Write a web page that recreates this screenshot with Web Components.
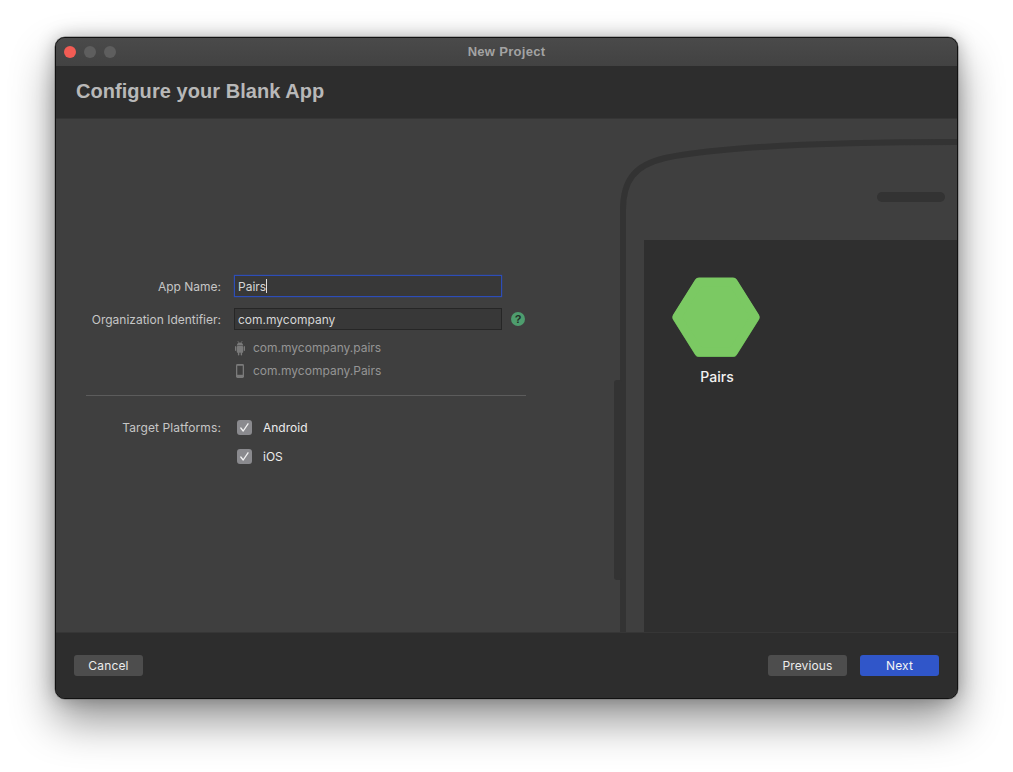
<!DOCTYPE html>
<html>
<head>
<meta charset="utf-8">
<title>New Project</title>
<style>
  html, body { margin: 0; height: 100%; background: #fff; }
  body {
    padding: 37px 0 0 55px;
    box-sizing: border-box;
    font-family: Inter, "Liberation Sans", sans-serif;
    overflow: hidden;
  }
</style>
</head>
<body>
<app-window>
  <title-bar slot="top">New Project</title-bar>
  <wizard-header slot="top">Configure your Blank App</wizard-header>
  <project-form>
    <form-row label="App Name:"><text-field value="Pairs" focused></text-field></form-row>
    <form-row label="Organization Identifier:" help><text-field value="com.mycompany"></text-field></form-row>
    <bundle-id icon="android">com.mycompany.pairs</bundle-id>
    <bundle-id icon="phone">com.mycompany.Pairs</bundle-id>
    <form-divider></form-divider>
    <form-row label="Target Platforms:" check><check-box>Android</check-box></form-row>
    <form-row check-next><check-box>iOS</check-box></form-row>
  </project-form>
  <phone-preview name="Pairs"></phone-preview>
  <wizard-footer slot="bottom">
    <mac-button>Cancel</mac-button>
    <mac-button slot="right">Previous</mac-button>
    <mac-button slot="right" primary>Next</mac-button>
  </wizard-footer>
</app-window>

<script>
function shadow(el, html) {
  el.attachShadow({ mode: "open" });
  const t = document.createElement("template");
  t.innerHTML = html;
  el.shadowRoot.appendChild(t.content.cloneNode(true));
}

class AppWindow extends HTMLElement {
  constructor() {
    super();
    shadow(this, `
      <style>
        :host {
          display: flex;
          flex-direction: column;
          width: 903px;
          height: 662px;
          box-sizing: border-box;
          background: #3f3f3f;
          border: 1px solid #111;
          border-radius: 10px;
          overflow: hidden;
          box-shadow: 0 0 0 .5px #777, 0 22px 44px rgba(0,0,0,.42), 0 0 18px rgba(0,0,0,.26);
        }
        .body { flex: 1; display: flex; min-height: 0; }
      </style>
      <slot name="top"></slot>
      <div class="body"><slot></slot></div>
      <slot name="bottom"></slot>
    `);
  }
}

class TitleBar extends HTMLElement {
  constructor() {
    super();
    shadow(this, `
      <style>
        :host {
          display: flex;
          align-items: center;
          justify-content: center;
          position: relative;
          height: 28px;
          box-sizing: border-box;
          padding-bottom: 2px;
          background: linear-gradient(#4a4a4a, #424242);
          color: #a3a3a3;
          font: 700 13px "Liberation Sans", sans-serif;
          letter-spacing: .3px;
        }
        .lights { position: absolute; left: 8px; top: 8px; display: flex; gap: 8px; }
        .lights i { width: 12px; height: 12px; border-radius: 50%; background: #5e5e5e; }
        .lights i:first-child { background: #f25c54; }
      </style>
      <div class="lights"><i></i><i></i><i></i></div>
      <slot></slot>
    `);
  }
}

class WizardHeader extends HTMLElement {
  constructor() {
    super();
    shadow(this, `
      <style>
        :host {
          display: flex;
          align-items: center;
          height: 53px;
          box-sizing: border-box;
          padding: 0 0 1px 20px;
          background: #2d2d2d;
          border-bottom: 1px solid #353535;
          color: #b8b8b8;
          font: 700 20px "Liberation Sans", sans-serif;
          letter-spacing: .05px;
        }
      </style>
      <slot></slot>
    `);
  }
}

class ProjectForm extends HTMLElement {
  constructor() {
    super();
    shadow(this, `
      <style>
        :host {
          display: flex;
          flex-direction: column;
          width: 543px;
          flex: none;
          box-sizing: border-box;
          padding-top: 156px;
        }
      </style>
      <slot></slot>
    `);
  }
}

class FormRow extends HTMLElement {
  constructor() {
    super();
    const help = this.hasAttribute("help");
    shadow(this, `
      <style>
        :host {
          display: grid;
          grid-template-columns: 165px 268px 24px;
          column-gap: 13px;
          align-items: center;
          min-height: 22px;
          margin-bottom: 11px;
          font-size: 12px;
          color: #c6c6c6;
        }
        :host([check]) { margin-top: 20px; margin-bottom: 7px; }
        :host([check]) .label { padding-top: 1px; letter-spacing: .12px; }
        :host([check-next]) { margin-bottom: 0; }
        .label { text-align: right; }
        .help {
          width: 14px; height: 14px; border-radius: 50%;
          background: #4e9d6e; color: #1f2f26;
          font: 700 11px/14px "Liberation Sans", sans-serif;
          text-align: center;
          margin-left: -4px;
        }
      </style>
      <div class="label">${this.getAttribute("label") || ""}</div>
      <slot></slot>
      ${help ? '<div class="help">?</div>' : ""}
    `);
  }
}

class TextField extends HTMLElement {
  constructor() {
    super();
    const focused = this.hasAttribute("focused");
    shadow(this, `
      <style>
        :host {
          display: flex;
          align-items: center;
          height: 22px;
          box-sizing: border-box;
          padding-left: 3px;
          background: #383838;
          border: 1px solid #262626;
          color: #d6d6d6;
          font-size: 12px;
        }
        :host([focused]) { border-color: #2d4db8; box-shadow: 0 0 1px #2d4db8; }
        .caret { width: 1px; height: 14px; background: #ddd; }
      </style>
      <span>${this.getAttribute("value")}</span>
      ${focused ? '<span class="caret"></span>' : ""}
    `);
  }
}

class BundleId extends HTMLElement {
  constructor() {
    super();
    const android = `<svg width="12" height="16" viewBox="0 0 12 16" fill="#7a7a7a">
      <path d="M3.8 1 4.7 2.8M8.2 1 7.3 2.8" stroke="#7a7a7a" stroke-width=".7" fill="none"/>
      <path d="M2.8 5.4C2.9 3.3 4.3 2.4 6 2.4s3.1.9 3.2 3z"/>
      <rect x="2.8" y="6" width="6.4" height="6.8" rx=".9"/>
      <rect x="1" y="6" width="1.3" height="5" rx=".65"/>
      <rect x="9.7" y="6" width="1.3" height="5" rx=".65"/>
      <rect x="3.9" y="12" width="1.4" height="3.4" rx=".7"/>
      <rect x="6.7" y="12" width="1.4" height="3.4" rx=".7"/>
    </svg>`;
    const phone = `<svg width="12" height="16" viewBox="0 0 12 16">
      <rect x="2" y="1" width="8" height="14" rx="1.4" fill="#7a7a7a"/>
      <rect x="3.3" y="2.8" width="5.4" height="9" fill="#3f3f3f"/>
    </svg>`;
    shadow(this, `
      <style>
        :host {
          display: flex;
          align-items: center;
          height: 23px;
          padding-left: 178px;
          color: #959595;
          font-size: 12px;
        }
        :host([icon="android"]) { margin-top: -5px; }
        svg { margin-right: 7px; flex: none; }
      </style>
      ${this.getAttribute("icon") === "android" ? android : phone}
      <slot></slot>
    `);
  }
}

class FormDivider extends HTMLElement {
  constructor() {
    super();
    shadow(this, `
      <style>
        :host {
          display: block;
          height: 1px;
          margin: 13px 0 0 30px;
          width: 440px;
          background: #5c5c5c;
        }
      </style>
    `);
  }
}

class CheckBox extends HTMLElement {
  constructor() {
    super();
    shadow(this, `
      <style>
        :host {
          display: flex;
          align-items: center;
          gap: 11px;
          padding-left: 3px;
          color: #ececec;
          font-size: 12px;
        }
        .box {
          width: 15px; height: 15px;
          border-radius: 3px;
          background: #8a8a8e;
          flex: none;
        }
        svg { display: block; }
      </style>
      <div class="box">
        <svg width="15" height="15" viewBox="0 0 15 15" fill="none">
          <path d="M3.8 8 6.2 11 11 3.8" stroke="#f2f2f2" stroke-width="1.3" stroke-linecap="round" stroke-linejoin="round"/>
        </svg>
      </div>
      <slot></slot>
    `);
  }
}

class PhonePreview extends HTMLElement {
  constructor() {
    super();
    shadow(this, `
      <style>
        :host {
          display: block;
          position: relative;
          flex: 1;
          min-width: 0;
          overflow: hidden;
        }
        svg.phone { position: absolute; left: 0; top: 0; }
        .screen {
          position: absolute;
          left: 45px; top: 121px; right: 0; bottom: 0;
          background: #2f2f2f;
        }
        .app {
          position: absolute;
          left: 28px; top: 37px;
          width: 88px;
          display: flex;
          flex-direction: column;
          align-items: center;
          gap: 11px;
          color: #f2f2f2;
          font-size: 14px;
          font-weight: 500;
        }
        .app svg { display: block; }
        .app div { margin-left: 2px; }
      </style>
      <svg class="phone" width="358" height="513" viewBox="0 0 358 513" fill="none">
        <path d="M24 513V91C24 61 36 46 66 39 121 28 231 23 358 23" stroke="#333" stroke-width="6"/>
        <rect x="15" y="261" width="8" height="200" rx="3" fill="#333"/>
        <rect x="278" y="73" width="68" height="10" rx="5" fill="#333"/>
      </svg>
      <div class="screen">
        <div class="app">
          <svg width="88" height="80" viewBox="0 0 88 80">
            <path d="M27 5H61L83 40 61 75H27L5 40z" fill="#5fa84e" stroke="#5fa84e" stroke-width="9" stroke-linejoin="round" transform="translate(0 .7)"/>
            <path d="M27 5H61L83 40 61 75H27L5 40z" fill="#7bc963" stroke="#7bc963" stroke-width="9" stroke-linejoin="round"/>
          </svg>
          <div>${this.getAttribute("name")}</div>
        </div>
      </div>
    `);
  }
}

class WizardFooter extends HTMLElement {
  constructor() {
    super();
    shadow(this, `
      <style>
        :host {
          display: flex;
          align-items: center;
          justify-content: space-between;
          height: 66px;
          box-sizing: border-box;
          padding: 0 18px 0 18px;
          background: #2d2d2d;
          border-top: 1px solid #363636;
        }
        .right { display: flex; gap: 13px; }
      </style>
      <slot></slot>
      <div class="right"><slot name="right"></slot></div>
    `);
  }
}

class MacButton extends HTMLElement {
  constructor() {
    super();
    shadow(this, `
      <style>
        :host {
          display: flex;
          align-items: center;
          justify-content: center;
          width: 79px;
          height: 21px;
          border-radius: 3px;
          background: #4d4d4d;
          color: #ececec;
          font-size: 12px;
          letter-spacing: .15px;
        }
        :host([primary]) { background: #3056c9; color: #f4f4f4; }
        :host(:not([slot])) { width: 69px; }
      </style>
      <slot></slot>
    `);
  }
}

customElements.define("app-window", AppWindow);
customElements.define("title-bar", TitleBar);
customElements.define("wizard-header", WizardHeader);
customElements.define("project-form", ProjectForm);
customElements.define("form-row", FormRow);
customElements.define("text-field", TextField);
customElements.define("bundle-id", BundleId);
customElements.define("form-divider", FormDivider);
customElements.define("check-box", CheckBox);
customElements.define("phone-preview", PhonePreview);
customElements.define("wizard-footer", WizardFooter);
customElements.define("mac-button", MacButton);
</script>
</body>
</html>
